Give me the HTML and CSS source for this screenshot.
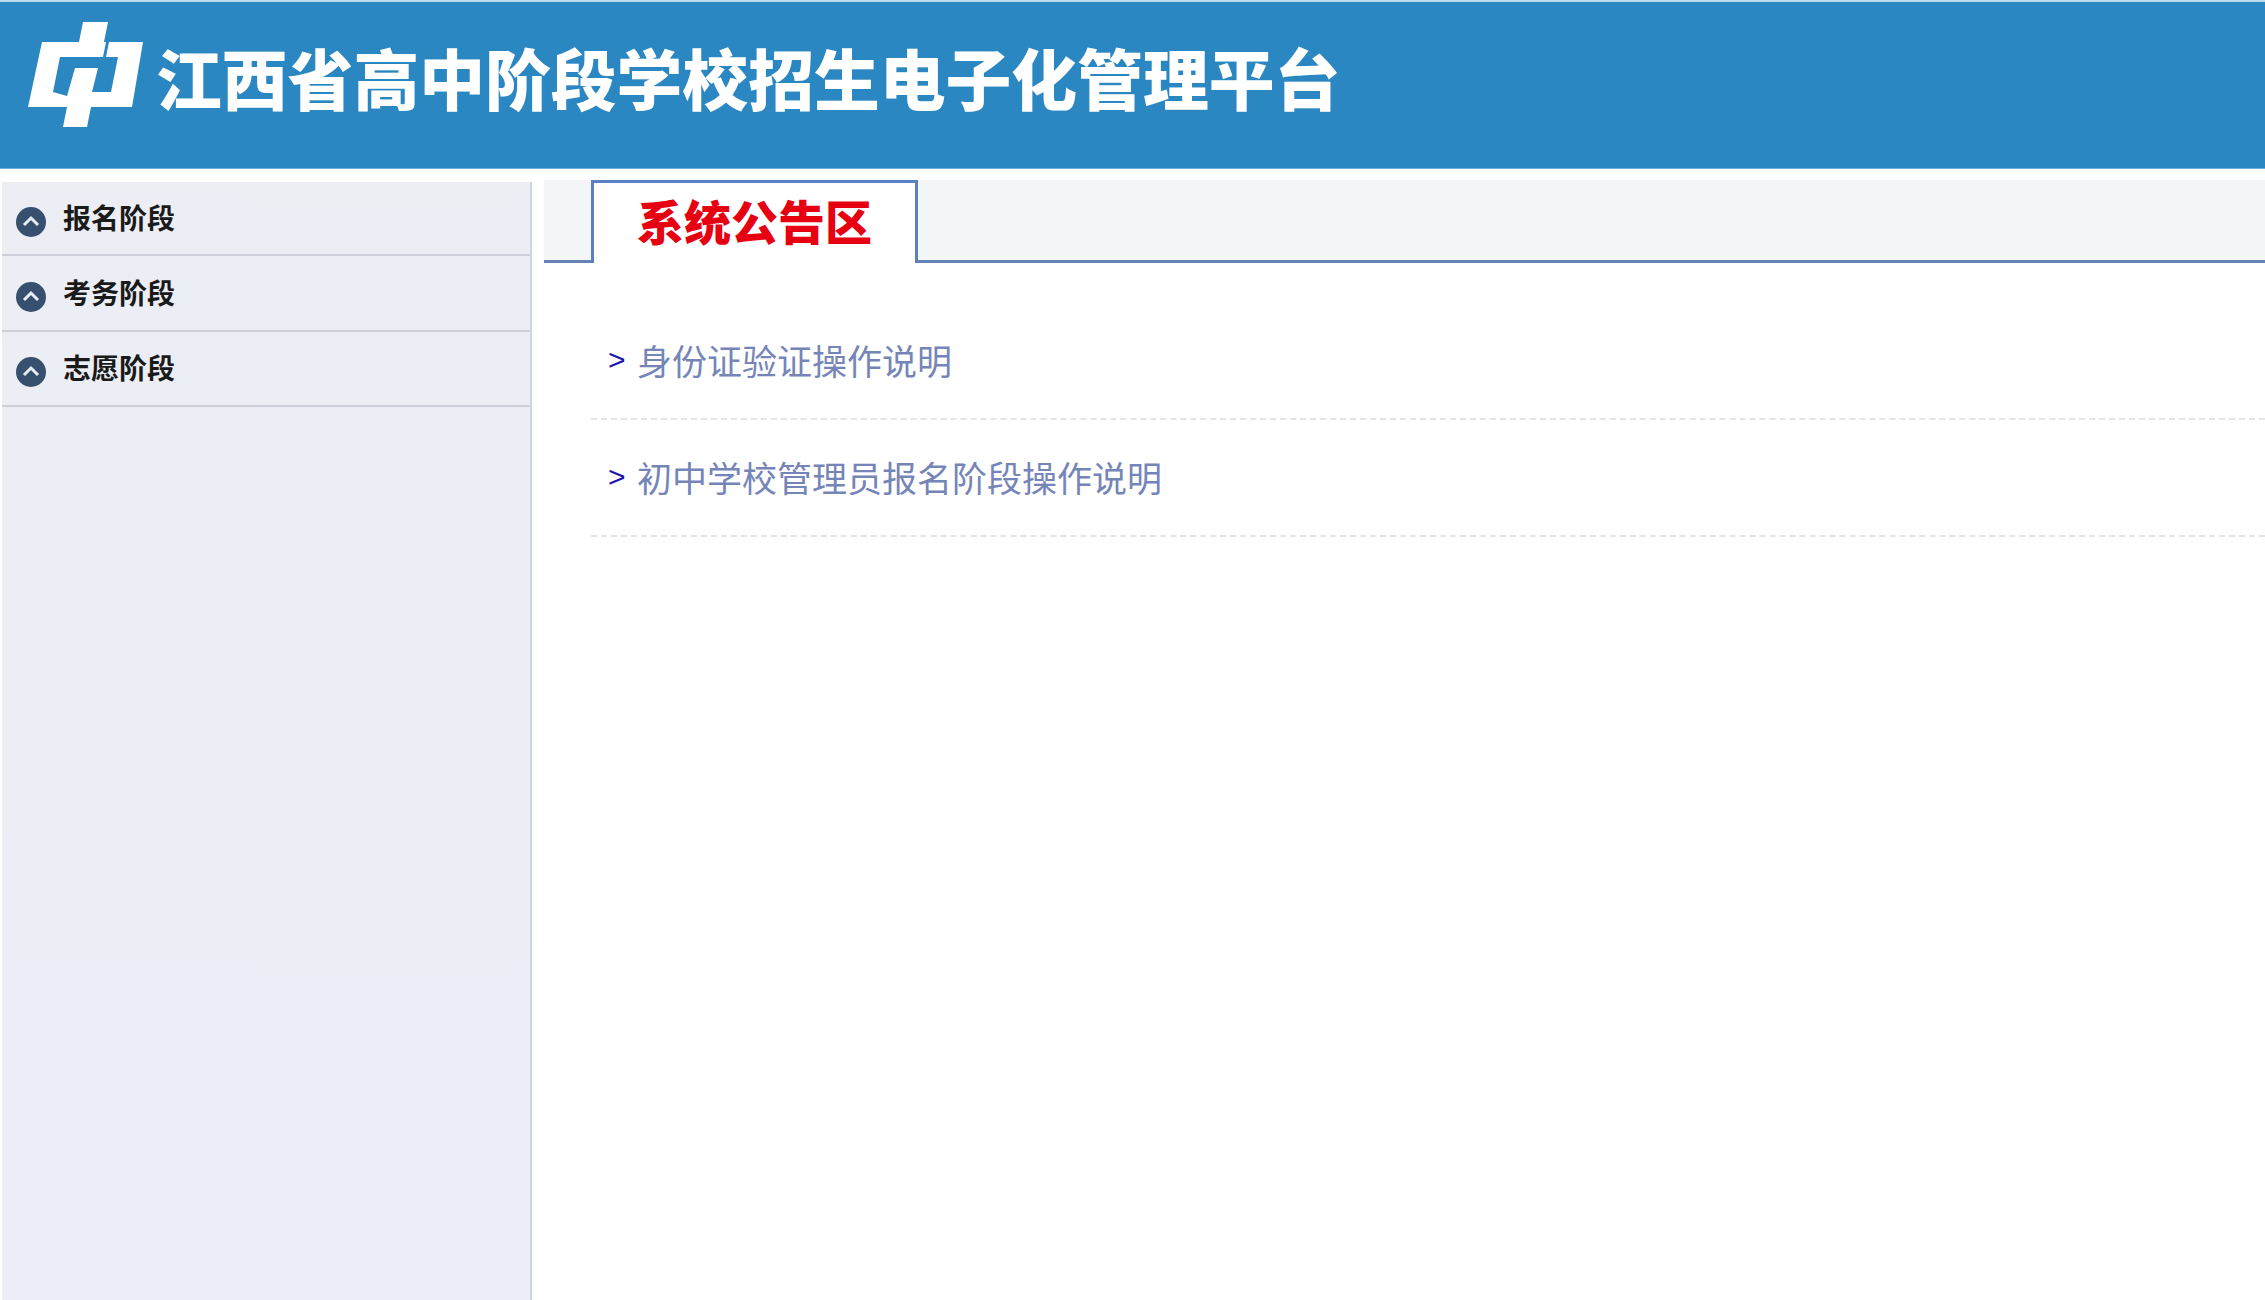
FILE: index.html
```html
<!DOCTYPE html>
<html lang="zh-CN">
<head>
    <meta charset="UTF-8">
    <title>江西省高中阶段学校招生电子化管理平台</title>
    <link rel="stylesheet" href="styles.css">
</head>
<body>

    <div class="header">
        <svg class="logo" viewBox="28 21 116 107">
            <path fill-rule="evenodd" d="M42 42H79L83 22H108L104 42H143L132 107H91L87 127H63L67 107H28ZM60 57H103L106 42H109L106 57H118L111 92H92L98 68H75L67 96L53 92Z"/>
        </svg>
        <h1 class="title">江西省高中阶段学校招生电子化管理平台</h1>
    </div>

    <div class="layout">
        <div class="sidebar">
            <div class="menu-item">
                <svg class="menu-icon" viewBox="0 0 30 30"><circle cx="15" cy="15" r="15"/><path d="M8 18L15 11L22 18"/></svg>
                <span>报名阶段</span>
            </div>
            <div class="menu-item">
                <svg class="menu-icon" viewBox="0 0 30 30"><circle cx="15" cy="15" r="15"/><path d="M8 18L15 11L22 18"/></svg>
                <span>考务阶段</span>
            </div>
            <div class="menu-item">
                <svg class="menu-icon" viewBox="0 0 30 30"><circle cx="15" cy="15" r="15"/><path d="M8 18L15 11L22 18"/></svg>
                <span>志愿阶段</span>
            </div>
        </div>

        <div class="main">
            <div class="tabs">
                <div class="tab">系统公告区</div>
            </div>
            <ul class="notice-list">
                <li><span class="arrow">&gt;</span><a href="#">身份证验证操作说明</a></li>
                <li><span class="arrow">&gt;</span><a href="#">初中学校管理员报名阶段操作说明</a></li>
            </ul>
        </div>
    </div>

</body>
</html>
```

FILE: styles.css
```css
* {
    margin: 0;
    padding: 0;
    box-sizing: border-box;
    font-family: "Noto Sans CJK SC", "Liberation Sans", sans-serif;
}
html, body {
    height: 1300px;
    overflow: hidden;
    background: #fff;
}
.header {
    height: 169px;
    background: #2a87c1;
    border-top: 2px solid #bcdcee;
    border-bottom: 1px solid #6fb0db;
    display: flex;
    align-items: center;
    padding-left: 28px;
}
.logo {
    width: 116px;
    height: 107px;
    fill: #fff;
    margin-top: -22px;
    margin-right: 12px;
}
.title {
    color: #fff;
    font-size: 65.8px;
    font-weight: 900;
    line-height: 1;
    margin-top: -17px;
    white-space: nowrap;
}
.layout {
    display: flex;
    height: 1131px;
    padding-top: 11px;
}
.sidebar {
    width: 530px;
    margin-left: 2px;
    margin-top: 2px;
    background: linear-gradient(180deg, #eceef4, #ebeef7);
    border-right: 2px solid #d0d5df;
}
.menu-item {
    height: 75.5px;
    display: flex;
    align-items: center;
    padding-left: 14px;
    border-bottom: 2px solid #cdd0da;
    color: #1a1a1a;
    font-size: 28px;
    font-weight: 700;
}
.menu-item:first-child {
    height: 74px;
}
.menu-item span {
    margin-left: 17px;
    margin-top: -2px;
}
.menu-icon {
    width: 30px;
    height: 30px;
    flex: none;
    margin-top: 8px;
}
.menu-icon circle {
    fill: #37506f;
}
.menu-icon path {
    fill: none;
    stroke: #e8edf3;
    stroke-width: 3;
}
.main {
    flex: 1;
    margin-left: 12px;
}
.tabs {
    height: 83px;
    padding-left: 47px;
    background: #f4f5f7;
    border-bottom: 3px solid #6483b5;
}
.tab {
    width: 327px;
    height: 83px;
    background: #fff;
    border: 3px solid #5b7fc0;
    border-bottom: 0;
    color: #e60012;
    font-size: 47px;
    font-weight: 900;
    line-height: 74px;
    text-align: center;
}
.notice-list {
    list-style: none;
    margin-left: 47px;
    margin-top: 40px;
}
.notice-list li {
    height: 117px;
    display: flex;
    align-items: center;
    padding-left: 17px;
    padding-bottom: 2px;
    border-bottom: 2px dashed #e4e5ea;
}
.arrow {
    width: 29px;
    color: #1a14b4;
    font-size: 30px;
    font-family: "Liberation Sans", sans-serif;
}
.notice-list a {
    color: #7585b8;
    font-size: 35px;
    font-weight: 400;
    text-decoration: none;
}
```
